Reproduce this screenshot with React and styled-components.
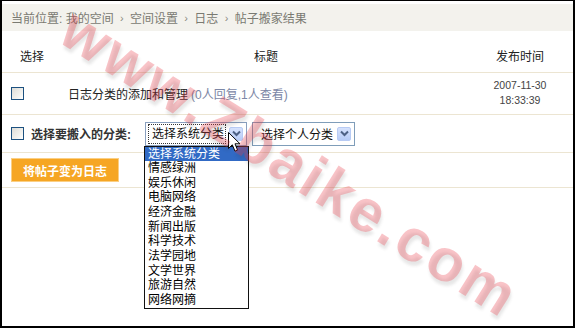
import React from 'react';
import styled, { createGlobalStyle } from 'styled-components';

const GlobalStyle = createGlobalStyle`
  html, body {
    margin: 0;
    padding: 0;
    background: #fff;
  }
  body {
    font-family: "Liberation Sans", "Noto Sans CJK SC", sans-serif;
    font-size: 12px;
    color: #222;
  }
`;

const categories = [
  '选择系统分类',
  '情感绿洲',
  '娱乐休闲',
  '电脑网络',
  '经济金融',
  '新闻出版',
  '科学技术',
  '法学园地',
  '文学世界',
  '旅游自然',
  '网络网摘',
];

function App() {
  return (
    <>
      <GlobalStyle />
      <Frame>
        <Breadcrumb>
          当前位置: 我的空间 <Sep>›</Sep> 空间设置 <Sep>›</Sep> 日志 <Sep>›</Sep> 帖子搬家结果
        </Breadcrumb>

        <Row $h={42} $align="end">
          <HeadCell $center>选择</HeadCell>
          <HeadCell $center>标题</HeadCell>
          <HeadCell $center>发布时间</HeadCell>
        </Row>

        <Row $h={42}>
          <Cell $pad={9}>
            <CheckBox />
          </Cell>
          <Cell $pad={6}>
            <TitleLink>日志分类的添加和管理</TitleLink>
            <Stats>(0人回复,1人查看)</Stats>
          </Cell>
          <DateCell>
            <span>2007-11-30</span>
            <span>18:33:39</span>
          </DateCell>
        </Row>

        <ToolRow $h={38}>
          <CheckBox />
          <Label>选择要搬入的分类:</Label>
          <SelectWrap>
            <SelectBox $w={102} $focused>
              <FocusText>选择系统分类</FocusText>
              <ArrowBtn>
                <Chevron />
              </ArrowBtn>
            </SelectBox>
            <ListBox>
              {categories.map((c, i) => (
                <Option key={c} $active={i === 0}>
                  {c}
                </Option>
              ))}
            </ListBox>
            <Cursor width="13" height="21" viewBox="0 0 13 21">
              <path
                d="M0.5 0.5 L0.5 16.5 L4.3 12.8 L7 19.2 L9.6 18.1 L7 11.8 L12 11.8 Z"
                fill="#fff"
                stroke="#000"
                strokeWidth="1"
                strokeLinejoin="miter"
              />
            </Cursor>
          </SelectWrap>
          <SelectBox $w={103}>
            <PlainText>选择个人分类</PlainText>
            <ArrowBtn>
              <Chevron />
            </ArrowBtn>
          </SelectBox>
        </ToolRow>

        <ToolRow $h={35}>
          <OrangeButton>将帖子变为日志</OrangeButton>
        </ToolRow>

        <Watermark>www.Zbaike.com</Watermark>
      </Frame>
    </>
  );
}

function Chevron() {
  return (
    <svg width="9" height="7" viewBox="0 0 9 7">
      <path d="M1 1.5 L4.5 5 L8 1.5" fill="none" stroke="#4d6185" strokeWidth="2" />
    </svg>
  );
}

const Frame = styled.div`
  position: relative;
  width: 575px;
  height: 328px;
  box-sizing: border-box;
  border-style: solid;
  border-color: #000;
  border-width: 1px 2px 2px 2px;
  padding-top: 3px;
  overflow: hidden;
  display: flex;
  flex-direction: column;
`;

const Breadcrumb = styled.div`
  height: 27px;
  background: #f3f2ed;
  color: #7a7a72;
  display: flex;
  align-items: center;
  gap: 3px;
  padding-left: 9px;
  white-space: pre;
`;

const Sep = styled.span`
  font-size: 11px;
  color: #8a8a80;
`;

const Row = styled.div`
  height: ${p => p.$h}px;
  box-sizing: border-box;
  display: grid;
  grid-template-columns: 60px 408px 100px;
  align-items: ${p => (p.$align === 'end' ? 'end' : 'center')};
  padding-bottom: ${p => (p.$align === 'end' ? '8px' : '0')};
  border-bottom: 1px solid #ece5d2;
`;

const HeadCell = styled.div`
  text-align: ${p => (p.$center ? 'center' : 'left')};
  color: #222;
  line-height: 14px;
`;

const Cell = styled.div`
  display: flex;
  align-items: center;
  padding-left: ${p => p.$pad}px;
`;

const DateCell = styled.div`
  display: flex;
  flex-direction: column;
  align-items: center;
  font-size: 10.5px;
  line-height: 15px;
  color: #444;
  padding-bottom: 1px;
`;

const CheckBox = styled.span`
  display: inline-block;
  width: 11px;
  height: 11px;
  border: 1px solid #1c5180;
  background: linear-gradient(135deg, #dcdcd7 0%, #f4f4f1 70%, #fff 100%);
`;

const TitleLink = styled.span`
  color: #222;
`;

const Stats = styled.span`
  color: #7c87a6;
  margin-left: 3px;
`;

const ToolRow = styled.div`
  height: ${p => p.$h}px;
  box-sizing: border-box;
  display: flex;
  align-items: center;
  padding-left: 9px;
  border-bottom: 1px solid #ece5d2;
  gap: 5px;
`;

const Label = styled.span`
  font-weight: bold;
  color: #333;
  margin-left: 2px;
  margin-right: 3px;
  width: 106px;
`;

const SelectWrap = styled.div`
  position: relative;
`;

const SelectBox = styled.div`
  width: ${p => p.$w}px;
  height: 24px;
  box-sizing: border-box;
  border: 1px solid ${p => (p.$focused ? '#8aa0bf' : '#7f9db9')};
  background: #fff;
  display: flex;
  align-items: center;
  padding: 0 3px 0 2px;
  gap: 3px;
`;

const FocusText = styled.span`
  flex: 1;
  height: 18px;
  line-height: 18px;
  border: 1px dotted #333;
  padding-left: 3px;
  white-space: nowrap;
  color: #111;
`;

const PlainText = styled.span`
  flex: 1;
  padding-left: 6px;
  white-space: nowrap;
  color: #111;
`;

const ArrowBtn = styled.span`
  width: 14px;
  height: 14px;
  box-sizing: border-box;
  border: 1px solid #b8cbf4;
  border-radius: 2px;
  background: linear-gradient(#d6e2fd, #b7ccf7);
  display: flex;
  align-items: center;
  justify-content: center;
`;

const ListBox = styled.div`
  position: absolute;
  top: 100%;
  left: -1px;
  width: 105px;
  box-sizing: border-box;
  border: 1px solid #111;
  background: #fff;
  z-index: 2;
`;

const Option = styled.div`
  height: 14.67px;
  line-height: 14.67px;
  padding-left: 3px;
  white-space: nowrap;
  color: ${p => (p.$active ? '#fff' : '#000')};
  background: ${p => (p.$active ? '#316ac5' : 'transparent')};
`;

const Cursor = styled.svg`
  position: absolute;
  left: 83px;
  top: 10px;
  z-index: 3;
`;

const OrangeButton = styled.button`
  height: 24px;
  padding: 0 11px;
  border: 1px solid #fbcf83;
  background: #f6a623;
  color: #fff;
  font-family: inherit;
  font-size: 12px;
  font-weight: bold;
`;

const Watermark = styled.div`
  position: absolute;
  left: 288px;
  top: 162px;
  transform: translate(-50%, -50%) rotate(32deg);
  font-family: "Liberation Sans", sans-serif;
  font-weight: bold;
  font-size: 60px;
  line-height: 44px;
  letter-spacing: 3px;
  white-space: nowrap;
  color: rgba(236, 60, 72, 0.3);
  text-shadow: 3px 3px 3px rgba(60, 60, 60, 0.12);
  pointer-events: none;
  z-index: 5;
`;

export default App;
